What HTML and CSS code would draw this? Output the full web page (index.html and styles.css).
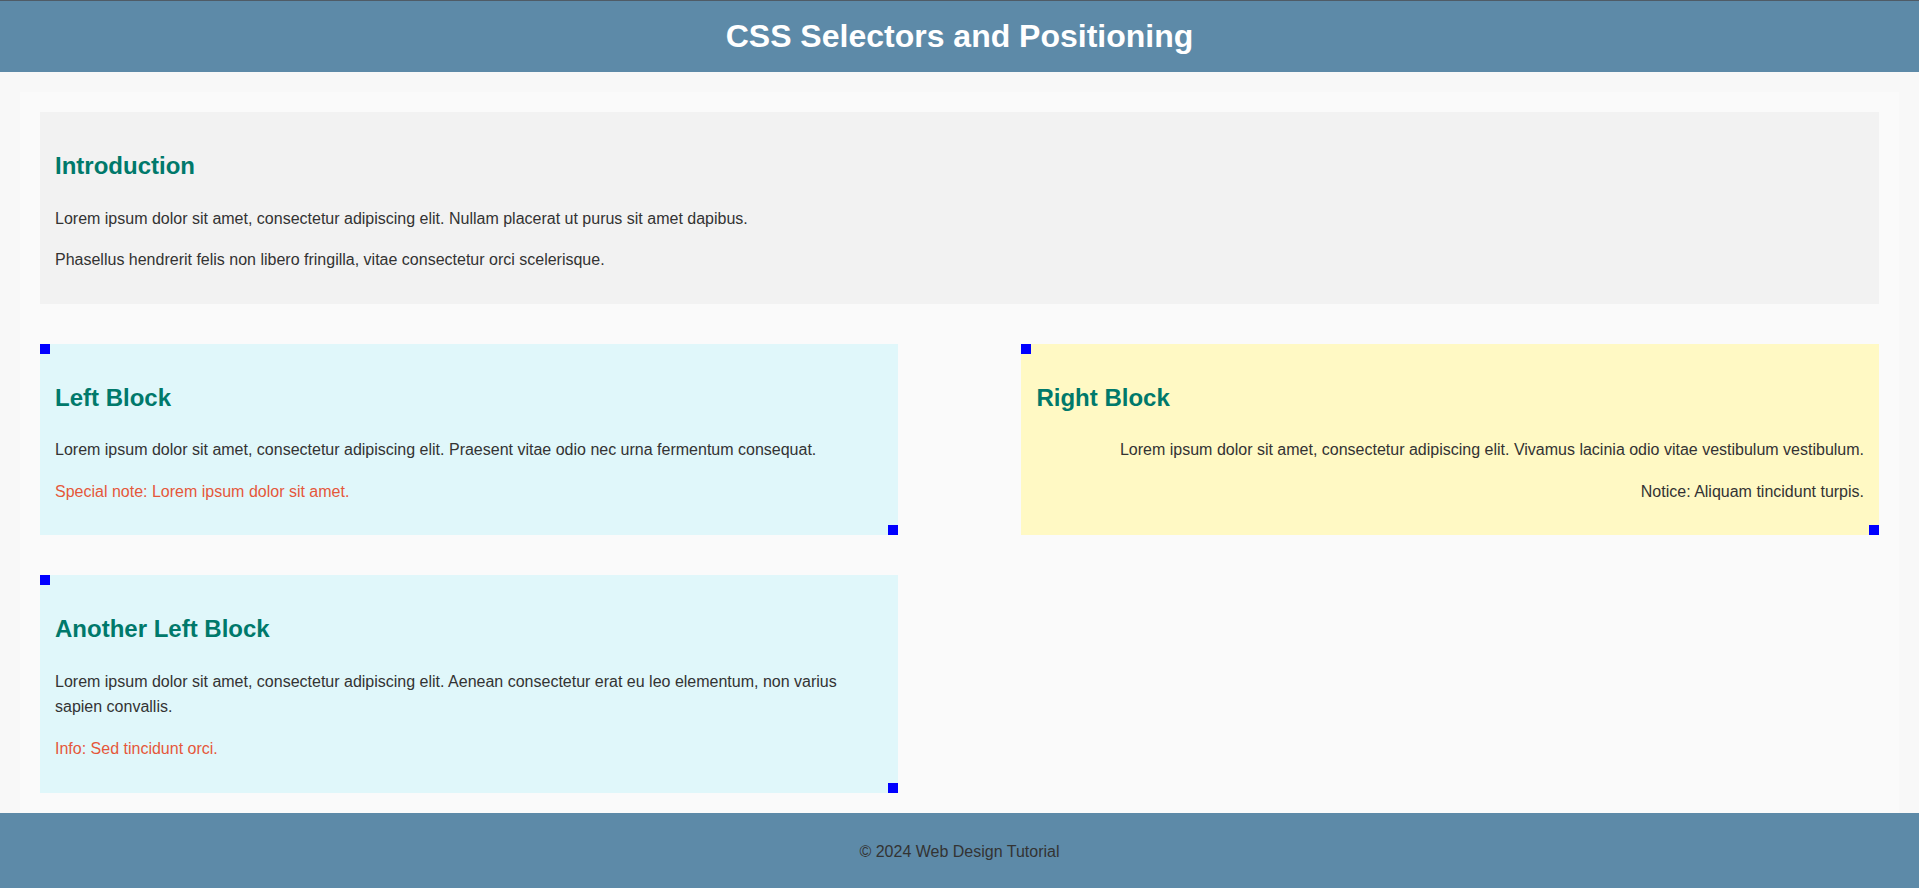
FILE: index.html
```html
<!DOCTYPE html>
<html lang="en">
<head>
<meta charset="utf-8">
<title>CSS Selectors and Positioning</title>
<link rel="stylesheet" href="styles.css">
</head>
<body>
<header class="site-header">
  <h1 class="site-title">CSS Selectors and Positioning</h1>
</header>
<main class="main">
  <div class="container">
    <section class="intro">
      <h2 class="block-title">Introduction</h2>
      <p>Lorem ipsum dolor sit amet, consectetur adipiscing elit. Nullam placerat ut purus sit amet dapibus.</p>
      <p>Phasellus hendrerit felis non libero fringilla, vitae consectetur orci scelerisque.</p>
    </section>
    <div class="blocks">
      <section class="block block-left">
        <h2 class="block-title">Left Block</h2>
        <p>Lorem ipsum dolor sit amet, consectetur adipiscing elit. Praesent vitae odio nec urna fermentum consequat.</p>
        <p class="note">Special note: Lorem ipsum dolor sit amet.</p>
      </section>
      <section class="block block-right">
        <h2 class="block-title">Right Block</h2>
        <p>Lorem ipsum dolor sit amet, consectetur adipiscing elit. Vivamus lacinia odio vitae vestibulum vestibulum.</p>
        <p>Notice: Aliquam tincidunt turpis.</p>
      </section>
      <section class="block block-left">
        <h2 class="block-title">Another Left Block</h2>
        <p>Lorem ipsum dolor sit amet, consectetur adipiscing elit. Aenean consectetur erat eu leo elementum, non varius sapien convallis.</p>
        <p class="note">Info: Sed tincidunt orci.</p>
      </section>
    </div>
  </div>
</main>
<footer class="site-footer">
  <p>&copy; 2024 Web Design Tutorial</p>
</footer>
</body>
</html>
```
FILE: styles.css
```css
html, body {
  margin: 0;
  padding: 0;
}

body {
  font-family: "Liberation Sans", Arial, sans-serif;
  font-size: 16px;
  line-height: 1.6;
  color: #333333;
  background: #f8f8f8;
}

.site-header {
  background: #5d8aa8;
  border-top: 1px solid #4f5b66;
  padding: 10px 0;
  text-align: center;
}

.site-title {
  margin: 0;
  font-size: 32px;
  font-weight: bold;
  color: #ffffff;
}

.main {
  padding: 20px 20px 0;
}

.container {
  background: #fafafa;
  padding: 20px 20px 20px;
}

.intro {
  background: #f2f2f2;
  padding: 15px;
  margin-bottom: 40px;
}

.block-title {
  font-size: 24px;
  font-weight: bold;
  color: #00796b;
  margin: 20px 0;
}

p {
  margin: 16px 0;
}

.blocks {
  display: grid;
  grid-template-columns: repeat(2, calc(45% + 30px));
  justify-content: space-between;
  row-gap: 40px;
  align-items: start;
}

.block {
  position: relative;
  padding: 15px;
}

.block::before,
.block::after {
  content: "";
  position: absolute;
  width: 10px;
  height: 10px;
  background: #0000ff;
}

.block::before {
  top: 0;
  left: 0;
}

.block::after {
  right: 0;
  bottom: 0;
}

.block-left {
  background: #e0f7fa;
  grid-column: 1;
}

.block-right {
  background: #fff9c4;
  grid-column: 2;
}

.block-right p {
  text-align: right;
}

.note {
  color: #e5573a;
}

.site-footer {
  background: #5d8aa8;
  padding: 10px 0;
  text-align: center;
  color: #333333;
}
```
